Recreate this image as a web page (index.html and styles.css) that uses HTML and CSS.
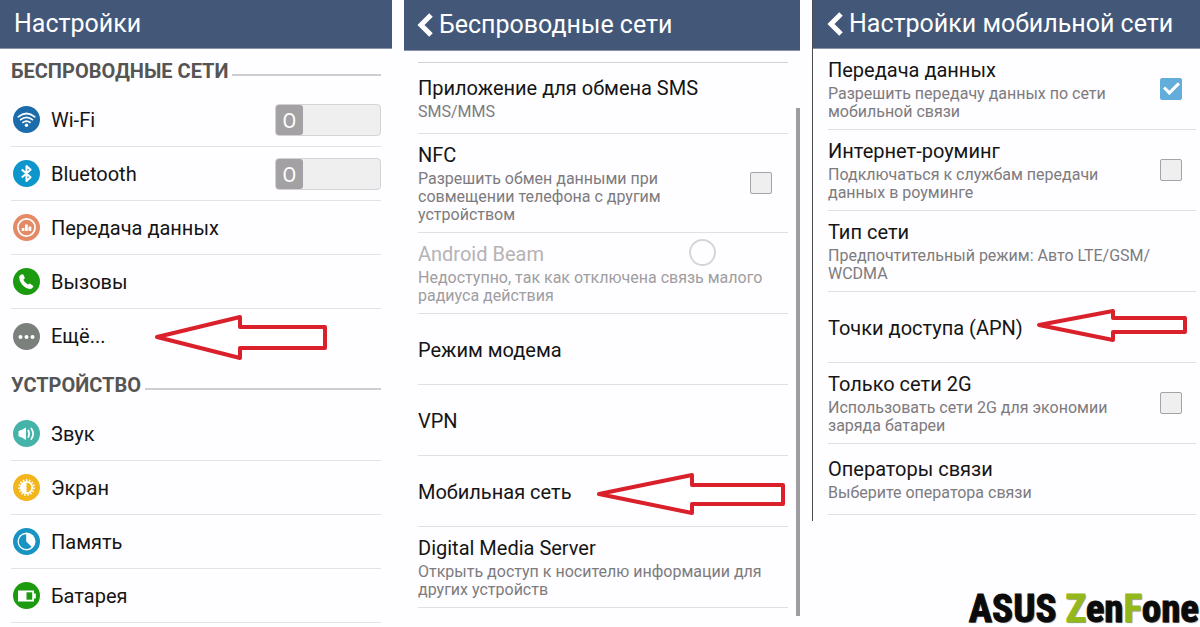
FILE: index.html
```html
<!DOCTYPE html>
<html lang="ru">
<head>
<meta charset="utf-8">
<meta name="viewport" content="width=device-width, initial-scale=1">
<title>Настройки мобильной сети</title>
<link rel="stylesheet" href="styles.css">
</head>
<body>
<main class="screens">

  <section class="screen">
    <header class="bar bar-plain"><h1 class="bar-title">Настройки</h1></header>

    <h2 class="group">Беспроводные сети</h2>
    <ul class="menu">
      <li class="entry">
        <svg class="icon" viewBox="0 0 27 27" aria-hidden="true"><circle cx="13.500" cy="13.500" r="13.500" fill="#1c6cab"/><g fill="none" stroke="#fff" stroke-width="1.700" stroke-linecap="round"><path d="M5.200 10.800Q13.500 4.200 21.800 10.800"/><path d="M7.600 13.700Q13.500 9 19.400 13.700"/><path d="M10 16.400Q13.500 13.700 17 16.400"/></g><circle cx="13.500" cy="19.300" r="1.700" fill="#fff"/></svg>
        <span class="name" id="wifi">Wi-Fi</span>
        <button class="switch" type="button" role="switch" aria-checked="false" aria-labelledby="wifi"><span class="knob">O</span></button>
      </li>
      <li class="entry">
        <svg class="icon" viewBox="0 0 27 27" aria-hidden="true"><circle cx="13.500" cy="13.500" r="13.500" fill="#0d96cb"/><path d="M8.800 9.400L17.600 17.300L13.500 21V6L17.600 9.700L8.800 17.600" fill="none" stroke="#fff" stroke-width="2" stroke-linejoin="round"/></svg>
        <span class="name" id="bt">Bluetooth</span>
        <button class="switch" type="button" role="switch" aria-checked="false" aria-labelledby="bt"><span class="knob">O</span></button>
      </li>
      <li class="entry">
        <svg class="icon" viewBox="0 0 27 27" aria-hidden="true"><circle cx="13.500" cy="13.500" r="13.500" fill="#e58a66"/><circle cx="13.500" cy="13.500" r="8.600" fill="none" stroke="#fff" stroke-width="1.700"/><path d="M8.800 17v-3h2.600v3zM12 17v-6.600h2.800V17zM15.500 17v-4.500h2.800V17z" fill="#fff"/></svg>
        <span class="name">Передача данных</span>
      </li>
      <li class="entry">
        <svg class="icon" viewBox="0 0 27 27" aria-hidden="true"><circle cx="13.500" cy="13.500" r="13.500" fill="#1d9b10"/><path d="M7.200 7.300L9.200 6.200Q10 6 10.400 6.800L11.700 9.500Q12 10.200 11.400 10.700L10.300 11.700Q11.700 14.700 14.800 16.600L16.200 15.800Q16.900 15.400 17.500 15.900L20 17.700Q20.600 18.200 20.200 19Q19 21 17 21Q12.500 20.700 9 16.500Q6 12.500 6.200 9.200Q6.300 8 7.200 7.300Z" fill="#fff"/></svg>
        <span class="name">Вызовы</span>
      </li>
      <li class="entry">
        <svg class="icon" viewBox="0 0 27 27" aria-hidden="true"><circle cx="13.500" cy="13.500" r="13.500" fill="#7b807d"/><g fill="#fff"><circle cx="7.500" cy="14" r="2"/><circle cx="13.500" cy="14" r="2"/><circle cx="19.500" cy="14" r="2"/></g></svg>
        <span class="name">Ещё...</span>
        <svg class="arrow arrow-more" width="176" height="48" viewBox="0 0 176 48" aria-hidden="true"><path d="M5 24L88 4V14H173V35H88V45Z"/></svg>
      </li>
    </ul>

    <h2 class="group">Устройство</h2>
    <ul class="menu">
      <li class="entry">
        <svg class="icon" viewBox="0 0 27 27" aria-hidden="true"><circle cx="13.500" cy="13.500" r="13.500" fill="#46b3a9"/><path d="M5.500 11.200Q7.500 10 8.500 10L13 7.500V20L8.500 17.300Q7.500 17.300 5.500 16.200Z" fill="#fff"/><path d="M15.300 10.500Q17 13.700 15.300 17M18.300 8.500Q22 13.700 18.300 19" fill="none" stroke="#fff" stroke-width="1.700" stroke-linecap="round"/></svg>
        <span class="name">Звук</span>
      </li>
      <li class="entry">
        <svg class="icon" viewBox="0 0 27 27" aria-hidden="true"><circle cx="13.500" cy="13.500" r="13.500" fill="#f2b61c"/><circle cx="13.500" cy="13.500" r="7.500" fill="none" stroke="#fff" stroke-width="1.800" stroke-dasharray="1.500 1.641"/><circle cx="13.500" cy="13.500" r="5.700" fill="none" stroke="#fff" stroke-width="1.700"/><path d="M13.500 8V19A5.500 5.500 0 0 1 13.500 8Z" fill="#fff"/></svg>
        <span class="name">Экран</span>
      </li>
      <li class="entry">
        <svg class="icon" viewBox="0 0 27 27" aria-hidden="true"><circle cx="13.500" cy="13.500" r="13.500" fill="#1793c4"/><circle cx="13.500" cy="13.500" r="9" fill="#fff"/><path d="M13.200 13.500V6.200A7.400 7.400 0 1 0 18.500 18.800Z" fill="#1793c4"/></svg>
        <span class="name">Память</span>
      </li>
      <li class="entry">
        <svg class="icon" viewBox="0 0 27 27" aria-hidden="true"><circle cx="13.500" cy="13.500" r="13.500" fill="#1d9b10"/><path d="M5 8.500H21V11.500H22.800V16.500H21V19.500H5Z" fill="#fff"/><path d="M13.500 10.300H19.200V17.700H13.500Z" fill="#1d9b10"/></svg>
        <span class="name">Батарея</span>
      </li>
    </ul>
  </section>

  <section class="screen screen-scrolled">
    <header class="bar">
      <button class="back" type="button" aria-label="Назад"><svg width="16" height="24" viewBox="0 0 16 24" aria-hidden="true"><path d="M14 2L4 12L14 22"/></svg></button>
      <h1 class="bar-title">Беспроводные сети</h1>
    </header>
    <ul class="options options-cut">
      <li class="option"><div class="text"><span class="name">Приложение для обмена SMS</span><span class="note">SMS/MMS</span></div></li>
      <li class="option">
        <label class="text" for="nfc"><span class="name">NFC</span><span class="note">Разрешить обмен данными при совмещении телефона с другим устройством</span></label>
        <input class="check" type="checkbox" id="nfc">
      </li>
      <li class="option option-off">
        <label class="text text-wide" for="beam"><span class="name">Android Beam</span><span class="note">Недоступно, так как отключена связь малого радиуса действия</span></label>
        <input class="round" type="radio" id="beam" disabled>
      </li>
      <li class="option"><span class="name">Режим модема</span></li>
      <li class="option"><span class="name">VPN</span></li>
      <li class="option">
        <span class="name">Мобильная сеть</span>
        <svg class="arrow arrow-mobile" width="192" height="44" viewBox="0 0 192 44" aria-hidden="true"><path d="M4 22L97 3V13H188V32H97V41Z"/></svg>
      </li>
      <li class="option"><div class="text"><span class="name">Digital Media Server</span><span class="note">Открыть доступ к носителю информации для других устройств</span></div></li>
    </ul>
    <div class="thumb"></div>
  </section>

  <div class="last">
    <section class="screen screen-edge">
      <header class="bar bar-plain">
        <button class="back" type="button" aria-label="Назад"><svg width="16" height="24" viewBox="0 0 16 24" aria-hidden="true"><path d="M14 2L4 12L14 22"/></svg></button>
        <h1 class="bar-title">Настройки мобильной сети</h1>
      </header>
      <ul class="options options-edge">
        <li class="option">
          <label class="text" for="data"><span class="name">Передача данных</span><span class="note">Разрешить передачу данных по сети мобильной связи</span></label>
          <input class="check" type="checkbox" id="data" checked>
        </li>
        <li class="option">
          <label class="text" for="roaming"><span class="name">Интернет-роуминг</span><span class="note">Подключаться к службам передачи данных в роуминге</span></label>
          <input class="check" type="checkbox" id="roaming">
        </li>
        <li class="option"><div class="text"><span class="name">Тип сети</span><span class="note">Предпочтительный режим: Авто LTE/GSM/<wbr>WCDMA</span></div></li>
        <li class="option">
          <span class="name">Точки доступа (APN)</span>
          <svg class="arrow arrow-apn" width="154" height="36" viewBox="0 0 154 36" aria-hidden="true"><path d="M5 18L79 4V11H151V25H79V33Z"/></svg>
        </li>
        <li class="option">
          <label class="text" for="only2g"><span class="name">Только сети 2G</span><span class="note">Использовать сети 2G для экономии заряда батареи</span></label>
          <input class="check" type="checkbox" id="only2g">
        </li>
        <li class="option"><div class="text"><span class="name">Операторы связи</span><span class="note">Выберите оператора связи</span></div></li>
      </ul>
    </section>
    <p class="brand">ASUS <span class="lime">Z</span>en<span class="lime">F</span>one</p>
  </div>

</main>
</body>
</html>
```

FILE: styles.css
```css
* { box-sizing: border-box; }

body {
  margin: 0;
  background: #fefdff;
  color: #151515;
  font-family: Roboto, "Noto Sans", sans-serif;
}

ul { list-style: none; margin: 0; padding: 0; }

.screens {
  display: grid;
  grid-template-columns: 392fr 396fr 388fr;
  gap: 12px;
  min-height: 100vh;
}

.screen { position: relative; min-width: 0; }

.bar {
  display: flex;
  align-items: center;
  gap: 6px;
  height: 51px;
  padding: 0 13px;
  background: #435878;
  border-bottom: 1px solid #8794a8;
  color: #fff;
}
.bar-plain { height: 49px; padding: 0 14px; }
.bar-title { margin: 0; font-size: 25px; line-height: 32px; font-weight: 400; white-space: nowrap; }

.back { display: flex; padding: 0; border: 0; background: none; }
.back path { fill: none; stroke: #fff; stroke-width: 5; }

.group {
  display: flex;
  align-items: center;
  gap: 4px;
  height: 44px;
  margin: 0 11px;
  color: #555;
  font-size: 20px;
  line-height: 24px;
  font-weight: 700;
  text-transform: uppercase;
}
.group::after { content: ""; flex: 1; height: 2px; margin-top: 8px; background: #cfcdd0; }

.menu { padding: 0 11px; }
.entry {
  position: relative;
  display: flex;
  align-items: center;
  gap: 11px;
  height: 54px;
  padding-left: 2px;
  border-bottom: 1px solid #e3e0e6;
}
.group + .menu .entry:nth-child(5) { border-bottom: 0; }
.icon { width: 27px; height: 27px; }

.name { font-size: 20px; line-height: 24px; }

.switch {
  width: 106px;
  height: 32px;
  margin-left: auto;
  padding: 0;
  border: 1px solid #d4d2d4;
  border-radius: 4px;
  background: #f0eff0;
  text-align: left;
}
.knob {
  display: block;
  width: 27px;
  height: 30px;
  border-radius: 3px;
  background: #a3a1a3;
  color: #fff;
  font: 20px/32px Roboto, sans-serif;
  text-align: center;
}

.options { padding: 0 12px 0 14px; }
.options-cut { margin-top: 11px; }
.options-cut::before { content: ""; display: block; height: 1px; background: #d3d1d6; }
.options-edge { padding: 0 4px 6px 15px; }
.option {
  position: relative;
  display: flex;
  align-items: center;
  justify-content: space-between;
  min-height: 71px;
  padding: 9px 16px 8px 0;
  border-bottom: 1px solid #e1dfe4;
}
.options-edge .option { padding-right: 14px; }
.text { display: flex; flex-direction: column; gap: 3px; }
label.text { max-width: 286px; }
.options-cut label.text { max-width: 260px; }
.options-cut label.text-wide { max-width: none; }
.note { color: #7d7b7e; font-size: 16px; line-height: 18px; }
.option-off .name { color: #b5b3b6; }
.option-off .note { color: #a09ea1; }

.check {
  appearance: none;
  flex: none;
  display: grid;
  place-items: center;
  width: 22px;
  height: 22px;
  margin: 0 0 2px;
  border: 1px solid #a5a3a5;
  border-radius: 2px;
  background: #f0eff0;
}
.check:checked { border-color: #62add9; background: #62add9; }
.check:checked::before {
  content: "";
  width: 12px;
  height: 6px;
  margin-bottom: 4px;
  border: solid #fff;
  border-width: 0 0 3px 3px;
  transform: rotate(-45deg);
}

.round {
  appearance: none;
  position: absolute;
  top: 6px;
  right: 72px;
  width: 27px;
  height: 27px;
  margin: 0;
  border: 2px solid #d6d4d7;
  border-radius: 50%;
}

.arrow { position: absolute; }
.arrow path { fill: #fff; stroke: #da202b; stroke-width: 4; stroke-linejoin: round; }
.arrow-more { left: 141px; top: 4px; }
.arrow-mobile { right: 1px; top: 16px; }
.arrow-apn { right: 8px; top: 15px; }

.thumb {
  position: absolute;
  top: 108px;
  right: 0;
  width: 4px;
  height: 508px;
  background: #9e9ca0;
}

.last { display: flex; flex-direction: column; justify-content: space-between; min-width: 0; }
.screen-edge { border-left: 1px solid #4c4c50; }

.brand {
  margin: 0;
  padding-right: 1px;
  color: #0b0b0b;
  font: 700 39px/36px Impact, "Liberation Sans Narrow", "Roboto Condensed", "Open Sans Condensed", sans-serif;
  text-align: right;
  white-space: nowrap;
  -webkit-text-stroke: 1px currentColor;
  text-shadow: 1px 1px 1px #8a8a8a;
}
.lime { color: #93b81c; }
```
